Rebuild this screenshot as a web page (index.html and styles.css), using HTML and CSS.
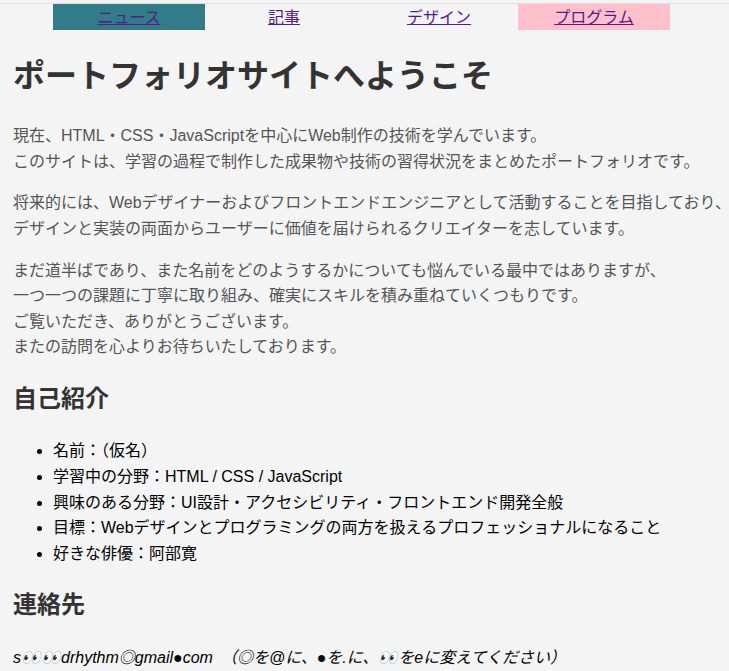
FILE: index.html
```html
<!DOCTYPE html>
<html lang="ja">
<head>
<meta charset="utf-8">
<title>ポートフォリオ</title>
<link rel="stylesheet" href="styles.css">
</head>
<body>
<header class="site-header">
  <nav class="global-nav">
    <ul class="nav-list">
      <li class="nav-item nav-news"><a href="#">ニュース</a></li>
      <li class="nav-item"><a href="#">記事</a></li>
      <li class="nav-item"><a href="#">デザイン</a></li>
      <li class="nav-item nav-program"><a href="#">プログラム</a></li>
    </ul>
  </nav>
</header>
<main class="content">
  <h1 class="page-title">ポートフォリオサイトへようこそ</h1>
  <p class="lead">現在、HTML・CSS・JavaScriptを中心にWeb制作の技術を学んでいます。<br>このサイトは、学習の過程で制作した成果物や技術の習得状況をまとめたポートフォリオです。</p>
  <p class="lead">将来的には、Webデザイナーおよびフロントエンドエンジニアとして活動することを目指しており、<br>デザインと実装の両面からユーザーに価値を届けられるクリエイターを志しています。</p>
  <p class="lead">まだ道半ばであり、また名前をどのようするかについても悩んでいる最中ではありますが、<br>一つ一つの課題に丁寧に取り組み、確実にスキルを積み重ねていくつもりです。<br>ご覧いただき、ありがとうございます。<br>またの訪問を心よりお待ちいたしております。</p>
  <h2 class="section-title">自己紹介</h2>
  <ul class="profile">
    <li>名前：（仮名）</li>
    <li>学習中の分野：HTML / CSS / JavaScript</li>
    <li>興味のある分野：UI設計・アクセシビリティ・フロントエンド開発全般</li>
    <li>目標：Webデザインとプログラミングの両方を扱えるプロフェッショナルになること</li>
    <li>好きな俳優：阿部寛</li>
  </ul>
  <h2 class="section-title">連絡先</h2>
  <p class="contact"><em>s👀👀drhythm◎gmail●com　（◎を@に、●を.に、👀をeに変えてください）</em></p>
</main>
</body>
</html>
```

FILE: styles.css
```css
html {
  background: #f4f4f4;
}
body {
  margin: 0;
  padding: 0 0 0 13px;
  background: #f4f4f4;
  font-family: "Liberation Sans", "Noto Sans CJK JP", sans-serif;
  font-size: 16px;
  line-height: 1.6;
  color: #555;
}
.site-header {
  margin: 3px 0 0 -13px;
  border-top: 1px solid #dedede;
}
.nav-list {
  list-style: none;
  margin: 0;
  padding: 0 0 0 53px;
  display: flex;
  gap: 3px;
}
.nav-item {
  width: 152px;
  height: 26px;
  line-height: 25px;
  text-align: center;
  font-family: "Noto Sans CJK JP", sans-serif;
  font-size: 16px;
}
.nav-item a {
  color: #551a8b;
}
.nav-news {
  background: #317c88;
}
.nav-program {
  background: #ffc0cb;
}
.page-title {
  font-size: 32px;
  color: #333;
  margin: 21px 0;
}
.lead {
  margin: 16px 0;
  white-space: nowrap;
}
.section-title {
  font-size: 24px;
  color: #333;
  margin: 20px 0;
}
.profile {
  margin: 20px 0 16px;
  padding-left: 40px;
  color: #000;
}
.contact {
  margin: 20px 0;
  color: #000;
  white-space: nowrap;
}
```
